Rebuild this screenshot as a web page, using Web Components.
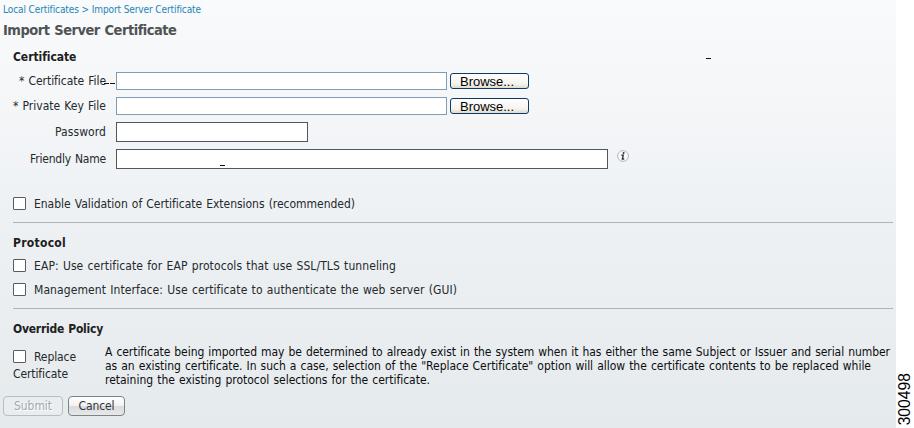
<!DOCTYPE html>
<html lang="en">
<head>
<meta charset="utf-8">
<title>Import Server Certificate</title>
<style>
  body {
    margin: 0;
    background: #fff;
    overflow: hidden;
    font: 12px/14px "DejaVu Sans Condensed", "DejaVu Sans", sans-serif;
    font-stretch: condensed;
    word-spacing: .7px;
    color: #24292c;
  }
</style>
</head>
<body>
<certificate-page></certificate-page>
<script>
/* One line of text, tracked so that it takes up exactly `width` pixels. */
class TextLine extends HTMLElement {

  constructor() {
    super();
    this.attachShadow({mode: 'open'}).innerHTML = `
      <style>
        :host { display: block; white-space: nowrap; }
        span { display: inline-block; }
      </style>
      <span><slot></slot></span>
    `;
  }

  connectedCallback() {
    const width = Number(this.getAttribute('width'));
    if (!width) return;
    const span = this.shadowRoot.querySelector('span');
    const length = this.textContent.length;
    const natural = span.getBoundingClientRect().width;
    const spacing = (width - natural) / length;
    span.style.letterSpacing = spacing + 'px';
  }

}

class SectionTitle extends HTMLElement {

  constructor() {
    super();
    this.attachShadow({mode: 'open'}).innerHTML = `
      <style>
        :host { display: block; height: 14px; margin-left: 13px; font-weight: bold; color: #1d2021; }
      </style>
      <slot></slot>
    `;
  }

}

class FormRow extends HTMLElement {

  constructor() {
    super();
    this.attachShadow({mode: 'open'}).innerHTML = `
      <style>
        :host { display: grid; grid-template-columns: 106px auto; column-gap: 10px; align-items: center; }
        .label { display: flex; justify-content: flex-end; }
        .field { display: flex; align-items: center; }
      </style>
      <div class="label"><slot name="label"></slot></div>
      <div class="field"><slot></slot></div>
    `;
  }

}

class TextField extends HTMLElement {

  constructor() {
    super();
    this.attachShadow({mode: 'open'}).innerHTML = `
      <style>
        :host { display: block; box-sizing: border-box; height: 20px; border: 1px solid #4d575c; background: #fff; }
        :host([file]) { width: 331px; height: 18px; border-color: #7f9db9; }
        :host([short]) { width: 192px; }
        :host([long]) { width: 492px; }
      </style>
    `;
  }

}

class BrowseButton extends HTMLElement {

  constructor() {
    super();
    this.attachShadow({mode: 'open'}).innerHTML = `
      <style>
        :host {
          display: block; box-sizing: border-box; width: 79px; height: 16px; margin-left: 3px; padding-left: 9px;
          border: 1px solid #0c3b69; border-radius: 3px;
          background: linear-gradient(#fff, #f5f4ef 70%, #dedacc);
          font: 13px/15px "Liberation Sans", Arial, sans-serif; color: #000;
        }
      </style>
      <text-line width="54">Browse...</text-line>
    `;
  }

}

class InfoIcon extends HTMLElement {

  constructor() {
    super();
    this.attachShadow({mode: 'open'}).innerHTML = `
      <style>
        :host { display: block; width: 12px; height: 12px; margin: -6px 0 0 9px; }
        svg { display: block; }
      </style>
      <svg width="12" height="12" viewBox="0 0 12 12">
        <circle cx="6" cy="6" r="5.4" fill="#fafafa" stroke="#b3b6b8"/>
        <circle cx="6.6" cy="3" r="1" fill="#333"/>
        <path d="M4.3 5.1H6.2L5.4 9H7.2" fill="none" stroke="#333" stroke-width="1.4"/>
      </svg>
    `;
  }

}

class CheckOption extends HTMLElement {

  constructor() {
    super();
    this.attachShadow({mode: 'open'}).innerHTML = `
      <style>
        :host { display: flex; align-items: center; gap: 8px; height: 13px; margin-left: 13px; }
        i { box-sizing: border-box; width: 13px; height: 13px; border: 1px solid #555d61; border-radius: 1px; background: #fff; }
      </style>
      <i></i><slot></slot>
    `;
  }

}

class PushButton extends HTMLElement {

  constructor() {
    super();
    this.attachShadow({mode: 'open'}).innerHTML = `
      <style>
        :host {
          display: flex; box-sizing: border-box; justify-content: center; align-items: center;
          width: 57px; height: 20px; border: 1px solid #7e8386; border-radius: 4px;
          background: linear-gradient(#fff, #f1f2f3 48%, #d9dbdc 52%, #e6e8e9); color: #303538;
        }
        :host([disabled]) {
          width: 60px; border-color: #b9bdc0; background: #e9edef; color: #a5a9ab; text-shadow: 1px 1px #fff;
        }
      </style>
      <slot></slot>
    `;
  }

}

class CertificatePage extends HTMLElement {

  constructor() {
    super();
    this.attachShadow({mode: 'open'}).innerHTML = `
      <style>
        :host { display: grid; grid-template-columns: 896px 18px; height: 428px; }
        main {
          display: flex; flex-direction: column; position: relative;
          background: linear-gradient(#f8fafb, #f4f6f8 25%, #eef1f4 50%, #e9edef 80%, #e5eaec);
        }
        nav { margin: 3px 0 0 3px; height: 14px; font-size: 10px; word-spacing: 0; color: #2585b5; }
        h1 { margin: 4px 0 0 3px; height: 18px; font-size: 14.5px; line-height: 18px; color: #505354; }
        hr { width: 880px; height: 1px; margin: 0 0 0 13px; border: 0; background: #adb3b7; }
        .policy { display: grid; grid-template-columns: 105px auto; margin-top: 9px; }
        .policy check-option { margin-top: 5px; }
        .policy .wrap { margin: 4px 0 0 13px; }
        .description { color: #0c0e0f; }
        .buttons { display: flex; gap: 5px; margin: 9px 0 0 3px; }
        .dash { position: absolute; height: 1px; background: #111; }
        aside { display: flex; align-items: flex-end; }
        aside span {
          writing-mode: vertical-rl; transform: rotate(180deg); margin-bottom: 3px;
          font: 15.7px/18px "Liberation Sans", Arial, sans-serif; color: #000;
        }
      </style>
      <main>
        <nav><text-line width="198">Local Certificates &gt; Import Server Certificate</text-line></nav>
        <h1><text-line width="173">Import Server Certificate</text-line></h1>
        <section-title style="margin-top: 11px"><text-line width="63">Certificate</text-line></section-title>

        <form-row style="margin-top: 8px">
          <text-line slot="label" width="87">* Certificate File</text-line>
          <text-field file></text-field><browse-button></browse-button>
        </form-row>
        <form-row style="margin-top: 7px">
          <text-line slot="label" width="93">* Private Key File</text-line>
          <text-field file></text-field><browse-button></browse-button>
        </form-row>
        <form-row style="margin-top: 7px">
          <text-line slot="label" width="51">Password</text-line>
          <text-field short></text-field>
        </form-row>
        <form-row style="margin-top: 7px">
          <text-line slot="label" width="76">Friendly Name</text-line>
          <text-field long></text-field><info-icon></info-icon>
        </form-row>

        <check-option style="margin-top: 28px">
          <text-line width="321">Enable Validation of Certificate Extensions (recommended)</text-line>
        </check-option>
        <hr style="margin-top: 12px">

        <section-title style="margin-top: 13px"><text-line width="53">Protocol</text-line></section-title>
        <check-option style="margin-top: 9px">
          <text-line width="362">EAP: Use certificate for EAP protocols that use SSL/TLS tunneling</text-line>
        </check-option>
        <check-option style="margin-top: 11px">
          <text-line width="423">Management Interface: Use certificate to authenticate the web server (GUI)</text-line>
        </check-option>
        <hr style="margin-top: 12px">

        <section-title style="margin-top: 13px"><text-line width="90">Override Policy</text-line></section-title>
        <div class="policy">
          <div>
            <check-option><text-line width="42">Replace</text-line></check-option>
            <text-line class="wrap" width="55">Certificate</text-line>
          </div>
          <div class="description">
            <text-line width="785">A certificate being imported may be determined to already exist in the system when it has either the same Subject or Issuer and serial number</text-line>
            <text-line width="766">as an existing certificate. In such a case, selection of the "Replace Certificate" option will allow the certificate contents to be replaced while</text-line>
            <text-line width="325">retaining the existing protocol selections for the certificate.</text-line>
          </div>
        </div>
        <div class="buttons">
          <push-button disabled><text-line width="38">Submit</text-line></push-button>
          <push-button><text-line width="36">Cancel</text-line></push-button>
        </div>

        <!-- leader line remnants lying over the form -->
        <div class="dash" style="left: 104px; top: 83px; width: 5px"></div>
        <div class="dash" style="left: 110px; top: 83px; width: 5px"></div>
        <div class="dash" style="left: 220px; top: 165px; width: 5px"></div>
        <div class="dash" style="left: 706px; top: 58px; width: 5px"></div>
      </main>
      <aside><span>300498</span></aside>
    `;
  }

}

window.customElements.define('text-line', TextLine);
window.customElements.define('section-title', SectionTitle);
window.customElements.define('form-row', FormRow);
window.customElements.define('text-field', TextField);
window.customElements.define('browse-button', BrowseButton);
window.customElements.define('info-icon', InfoIcon);
window.customElements.define('check-option', CheckOption);
window.customElements.define('push-button', PushButton);
window.customElements.define('certificate-page', CertificatePage);
</script>
</body>
</html>
